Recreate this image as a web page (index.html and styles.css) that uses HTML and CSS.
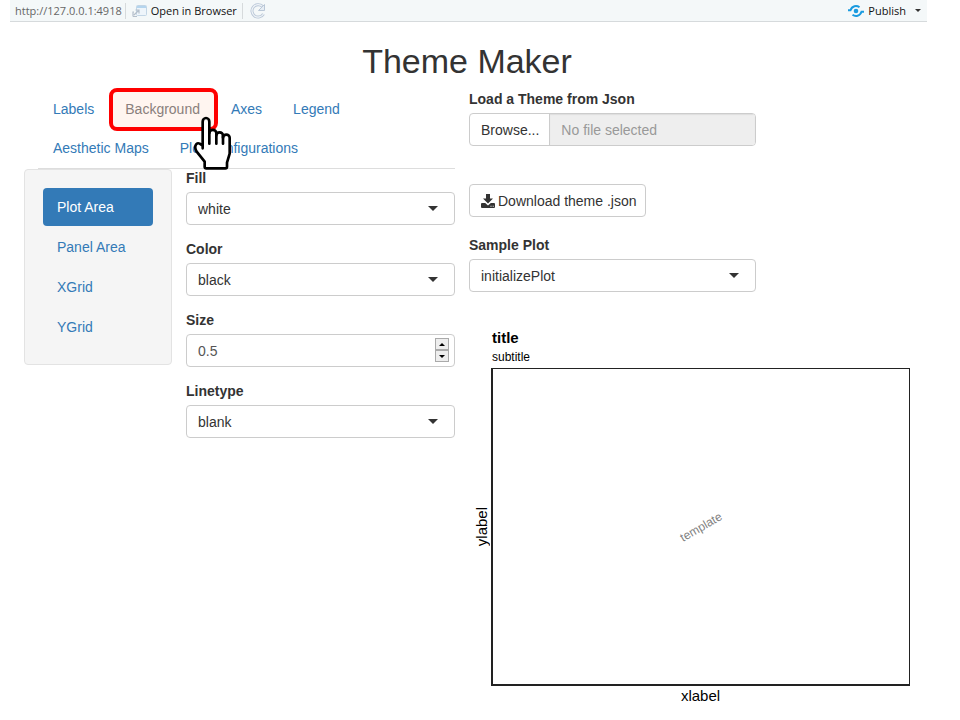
FILE: index.html
```html
<!DOCTYPE html>
<html lang="en">
<head>
<meta charset="utf-8">
<title>Theme Maker</title>
<link rel="stylesheet" href="styles.css">
</head>
<body>
<header class="toolbar">
  <span class="address">http://127.0.0.1:4918</span>
  <button type="button" class="tool open">
    <svg width="15" height="14" viewBox="0 0 15 14" aria-hidden="true">
      <rect x="4.5" y="1.5" width="10" height="10" rx="1" fill="#eef5fb" stroke="#c3d6e6"/>
      <path d="M5 3h9" stroke="#b5d5ee" stroke-width="2"/>
      <path d="M1 12.500V8h1M1 12.500h4M2 11l4.500-4.500M3.500 6h3.500v3.500" fill="none" stroke="#b4bfcb" stroke-width="1.200"/>
    </svg>
    Open in Browser
  </button>
  <button type="button" class="tool refresh" aria-label="Refresh">
    <svg width="16" height="16" viewBox="0 0 16 16" aria-hidden="true" fill="none">
      <path d="M12.500 3.400A6.200 6.200 0 1 0 13.500 11" stroke="#b9c7d7" stroke-width="3"/>
      <path d="M12.500 3.400A6.200 6.200 0 1 0 13.500 11" stroke="#f0f4f8" stroke-width="1.200"/>
      <path d="M14.500 1.500v6H8.500z" fill="#e6edf4" stroke="#b9c7d7"/>
    </svg>
  </button>
  <button type="button" class="publish">
    <svg width="16" height="12" viewBox="0 0 16 12" aria-hidden="true" fill="none">
      <circle cx="8" cy="6" r="2.300" fill="#1a9be0"/>
      <path d="M0 5.200H2.500C4 .8 8.500 0 11.500 2.300M16 6.800H13.500C12 11.200 7.500 12 4.500 9.700" stroke="#1a9be0" stroke-width="2"/>
    </svg>
    Publish
    <span class="caret small"></span>
  </button>
</header>

<main class="page">
  <h1>Theme Maker</h1>
  <div class="columns">
    <section class="editor">
      <nav class="tabs">
        <a href="#labels">Labels</a>
        <a href="#background" class="active" aria-current="page">Background
          <svg class="pointer" width="41" height="56" viewBox="0 0 123 168" aria-hidden="true">
            <path d="M29 100V20a10 11 0 0 1 20 0V54a10 9 0 0 1 21 0V61a10 9 0 0 1 20 0V68a10 9 0 0 1 20 0V116L102 143V155q0 5-5 5H40q-5 0-5-5V140L11 110C2 96 9 80 20 86L29 92z" fill="#fff" stroke="#000" stroke-width="8" stroke-linejoin="round"/>
            <path d="M49 50V86M70 54V86M90 62V86" fill="none" stroke="#000" stroke-width="8" stroke-linecap="round"/>
          </svg>
        </a>
        <a href="#axes">Axes</a>
        <a href="#legend">Legend</a>
        <a href="#maps">Aesthetic Maps</a>
        <a href="#config">Plot Configurations</a>
      </nav>
      <div class="pane">
        <nav class="well">
          <a href="#plot-area" class="active">Plot Area</a>
          <a href="#panel-area">Panel Area</a>
          <a href="#xgrid">XGrid</a>
          <a href="#ygrid">YGrid</a>
        </nav>
        <form class="fields">
          <div class="field">
            <label for="fill">Fill</label>
            <div class="select"><select id="fill"><option>white</option></select><span class="caret"></span></div>
          </div>
          <div class="field">
            <label for="color">Color</label>
            <div class="select"><select id="color"><option>black</option></select><span class="caret"></span></div>
          </div>
          <div class="field">
            <label for="size">Size</label>
            <div class="number">
              <input id="size" type="number" step="0.5" value="0.5">
              <div class="spinner">
                <button type="button" aria-label="Increase"><span class="arrow up"></span></button>
                <button type="button" aria-label="Decrease"><span class="arrow"></span></button>
              </div>
            </div>
          </div>
          <div class="field">
            <label for="linetype">Linetype</label>
            <div class="select"><select id="linetype"><option>blank</option></select><span class="caret"></span></div>
          </div>
        </form>
      </div>
    </section>

    <section class="preview">
      <div class="field narrow upload">
        <label for="json">Load a Theme from Json</label>
        <div class="file">
          <label class="browse" for="json">Browse...</label>
          <input class="native" id="json" type="file">
          <input class="filename" type="text" placeholder="No file selected" aria-label="Selected file" readonly>
        </div>
      </div>
      <button type="button" class="download">
        <svg width="14" height="14" viewBox="0 0 14 14" aria-hidden="true" fill="#333">
          <path d="M5 0h4v4.500h3L7 9.500 2 4.500h3z"/>
          <path fill-rule="evenodd" d="M1 9h3.200L7 11.500 9.800 9H13q1 0 1 1v3q0 1-1 1H1q-1 0-1-1v-3q0-1 1-1zM9.500 11.800v1h1v-1zM11.700 11.800v1h1v-1z"/>
        </svg>
        Download theme .json
      </button>
      <div class="field narrow">
        <label for="sample">Sample Plot</label>
        <div class="select"><select id="sample"><option>initializePlot</option></select><span class="caret"></span></div>
      </div>
      <figure class="plot">
        <figcaption><strong>title</strong><span>subtitle</span></figcaption>
        <div class="ylabel">ylabel</div>
        <div class="panel"><span>template</span></div>
        <div class="xlabel">xlabel</div>
      </figure>
    </section>
  </div>
</main>
</body>
</html>
```

FILE: styles.css
```css
* { box-sizing: border-box; }

body {
  margin: 0;
  background: #fff;
  color: #333;
  font: 14px/18px "Liberation Sans", Arial, sans-serif;
}

a { color: #337ab7; text-decoration: none; }
button, input, select { font: inherit; color: inherit; }

.toolbar {
  display: flex;
  align-items: center;
  height: 22px;
  margin: 0 33px 0 10px;
  padding: 0 6px 0 5px;
  background: #f4f8f9;
  border-bottom: 1px solid #d6dadc;
  color: #666;
  font: 11px/16px "Open Sans", "Noto Sans", sans-serif;
}

.toolbar button {
  display: flex;
  align-items: center;
  gap: 4px;
  padding: 0;
  border: 0;
  background: none;
  color: #111;
}

.toolbar .tool {
  margin-left: 3px;
  padding-left: 6px;
  border-left: 1px solid #d6dadc;
}

.toolbar .refresh { margin-left: 5px; padding-left: 7px; }
.toolbar .publish { margin-left: auto; }

.caret {
  border: 5px solid transparent;
  border-top-color: #333;
  border-bottom: 0;
}

.caret.small { margin-left: 5px; border-width: 3px 3px 0; }

.page { padding: 19px 50px 0 24px; }

h1 {
  margin: 0 0 9px;
  font-size: 34px;
  font-weight: 400;
  line-height: 40px;
  text-align: center;
}

.columns {
  display: grid;
  grid-template-columns: 431fr 441fr;
  gap: 14px;
}

.tabs {
  display: flex;
  flex-wrap: wrap;
  column-gap: 1px;
  margin-left: 14px;
  border-bottom: 1px solid #ddd;
}

.tabs a { position: relative; padding: 10px 15px 11px; }
.tabs .active { color: #8a7f7c; }

.tabs .active::before {
  content: "";
  position: absolute;
  z-index: -1;
  inset: -2px -3px -2px -1px;
  border: 4px solid #f00;
  border-radius: 8px;
  background: #fff5f0;
}

.pointer {
  position: absolute;
  z-index: 1;
  left: 83px;
  top: 25px;
}

.pane {
  display: grid;
  grid-template-columns: 148fr 269fr;
  gap: 14px;
  align-items: start;
}

.well {
  display: grid;
  gap: 2px;
  padding: 18px;
  border: 1px solid #e3e3e3;
  border-radius: 4px;
  background: #f5f5f5;
}

.well a { padding: 10px 14px; border-radius: 4px; }
.well .active { background: #337ab7; color: #fff; }

.field { margin-bottom: 15px; }
.field > label { display: block; margin-bottom: 5px; font-weight: 700; }
.narrow { width: 65%; }

.select, .number { position: relative; }

.select select, .number input, .file {
  display: block;
  width: 100%;
  height: 33px;
  border: 1px solid #ccc;
  border-radius: 4px;
  background: #fff;
}

.select select, .number input { padding: 0 11px; appearance: none; }
.number input { color: #555; appearance: textfield; }
.number input::-webkit-inner-spin-button { appearance: none; margin: 0; }

.select .caret {
  position: absolute;
  top: 14px;
  right: 17px;
  pointer-events: none;
}

.spinner {
  position: absolute;
  top: 4px;
  right: 6px;
  display: grid;
  width: 14px;
}

.spinner button {
  display: grid;
  place-items: center;
  height: 12px;
  padding: 0;
  border: 1px solid #aaa;
  background: #eee;
}

.arrow { border: 3px solid transparent; border-top-color: #000; border-bottom: 0; }
.arrow.up { transform: rotate(180deg); }

.upload { margin-bottom: 38px; }
.file { position: relative; display: flex; overflow: hidden; }
.native { position: absolute; width: 1px; height: 1px; opacity: 0; }
.browse { padding: 7px 10px 6px 11px; border-right: 1px solid #ccc; }

.filename {
  flex: 1;
  min-width: 0;
  padding: 0 11px;
  border: 0;
  background: #eee;
  box-shadow: inset 0 1px 1px #ddd;
}

.filename::placeholder { color: #999; opacity: 1; }

.download {
  display: flex;
  align-items: center;
  gap: 3px;
  height: 33px;
  margin-bottom: 19px;
  padding: 0 8px 0 11px;
  border: 1px solid #ccc;
  border-radius: 4px;
  background: #fff;
}

.plot {
  display: grid;
  grid-template-columns: 22px 1fr;
  margin: 36px 0 0;
  color: #000;
}

.plot figcaption { grid-column: 2; display: grid; padding: 0 0 2px 1px; }
.plot strong { font-size: 15px; line-height: 20px; }
.plot figcaption span { font-size: 12px; line-height: 18px; }

.ylabel {
  place-self: center end;
  writing-mode: vertical-rl;
  transform: rotate(180deg);
  font-size: 15px;
}

.panel {
  display: grid;
  place-items: center;
  aspect-ratio: 419 / 318;
  border: 1px solid #222;
  border-width: 1px 1px 2px 2px;
}

.panel span { color: #7f7f7f; font-size: 12px; transform: rotate(-30deg); }
.xlabel { grid-column: 2; font-size: 15px; line-height: 20px; text-align: center; }
```
